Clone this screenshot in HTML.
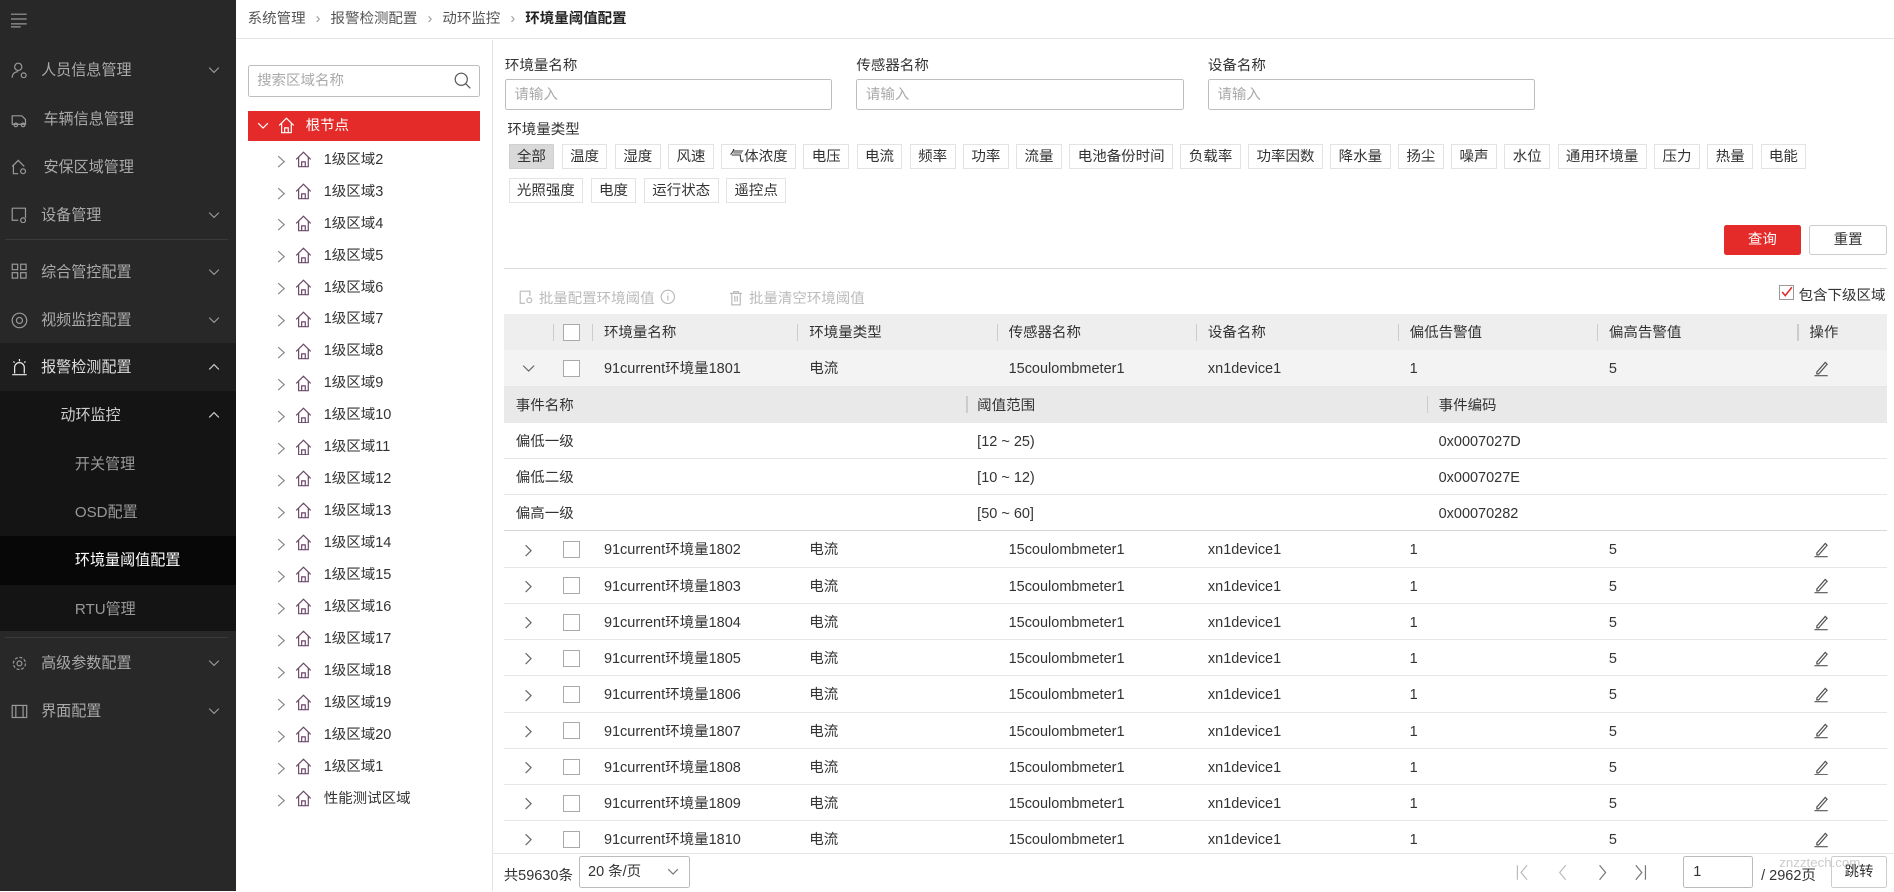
<!DOCTYPE html>
<html><head><meta charset="utf-8">
<style>
*{box-sizing:border-box;margin:0;padding:0}
html,body{width:1894px;height:892px;overflow:hidden;background:#fff}
#r{zoom:1.2079;width:1568px;height:738px;position:relative;font-family:"Liberation Sans","Noto Sans CJK SC",sans-serif;font-size:12px;color:#333;overflow:hidden}
.a{position:absolute}
#sb{left:0;top:0;width:195px;height:738px;background:#282828;color:#aaa;font-size:12.5px;overflow:hidden}
.mi{position:absolute;left:0;width:195px;height:40px;line-height:42px}
.mi .t{position:absolute;left:34px}
.mi .ic{position:absolute;left:9px;top:13px;width:14px;height:14px}
.mi .ch{position:absolute;left:172px;top:15px;width:10px;height:10px}
.tree .row{position:absolute;left:0;height:26px;line-height:28px;font-size:12px;color:#333}
.tag{display:inline-block;height:21px;line-height:20px;border:1px solid #e3e3e3;padding:0 6.1px;margin-right:6.2px;font-size:12px;color:#333;vertical-align:top}
.inp{position:absolute;height:26px;border:1px solid #bdbdbd;border-radius:2px;color:#aaa;padding-left:7px;line-height:26px;font-size:12px}
.tr{position:absolute;left:417px;width:1145px;height:30px;line-height:32px;border-bottom:1px solid #e6e6e6}
.tr span{position:absolute}
.cb{position:absolute;left:49px;top:8px;width:14px;height:14px;border:1px solid #aaa;background:#fff}
</style></head><body><div id="r">
<div id="sb" class="a">
 <svg class="a" style="left:9px;top:11px" width="14" height="12"><path d="M0 1h13M0 5h13M0 9h13M0 11.5h8" stroke="#999" stroke-width="1"/></svg>
 <div class="mi" style="top:38px"><svg class="ic" viewBox="0 0 14 14"><circle cx="6" cy="4" r="3" fill="none" stroke="#999"/><path d="M1 13c0-4 3-5 5-5" fill="none" stroke="#999"/><circle cx="10.5" cy="11" r="2" fill="none" stroke="#999"/></svg><span class="t">人员信息管理</span><svg class="ch"><path d="M1 3l4 4 4-4" fill="none" stroke="#999"/></svg></div>
 <div class="mi" style="top:79px"><svg class="ic" viewBox="0 0 14 14"><path d="M1 4h8l3 3v4H1z" fill="none" stroke="#999"/><circle cx="4" cy="11.5" r="1.5" fill="none" stroke="#999"/><circle cx="10" cy="11.5" r="1.5" fill="none" stroke="#999"/></svg><span class="t" style="left:36px">车辆信息管理</span></div>
 <div class="mi" style="top:118px"><svg class="ic" viewBox="0 0 14 14"><path d="M1 7l5-5 5 5M2 6v7h4" fill="none" stroke="#999"/><circle cx="10" cy="11" r="2" fill="none" stroke="#999"/></svg><span class="t" style="left:36px">安保区域管理</span></div>
 <div class="mi" style="top:158px"><svg class="ic" viewBox="0 0 14 14"><path d="M1 1h11v8M1 1v10h5" fill="none" stroke="#999"/><circle cx="10" cy="11" r="2" fill="none" stroke="#999"/></svg><span class="t">设备管理</span><svg class="ch"><path d="M1 3l4 4 4-4" fill="none" stroke="#999"/></svg></div>
 <div class="a" style="left:4px;top:198px;width:185px;height:1px;background:#3a3a3a"></div>
 <div class="mi" style="top:205px"><svg class="ic" viewBox="0 0 14 14"><rect x="1" y="1" width="4.5" height="4.5" fill="none" stroke="#999"/><rect x="8" y="1" width="4.5" height="4.5" fill="none" stroke="#999"/><rect x="1" y="8" width="4.5" height="4.5" fill="none" stroke="#999"/><rect x="8" y="8" width="4.5" height="4.5" fill="none" stroke="#999"/></svg><span class="t">综合管控配置</span><svg class="ch"><path d="M1 3l4 4 4-4" fill="none" stroke="#999"/></svg></div>
 <div class="mi" style="top:245px"><svg class="ic" viewBox="0 0 14 14"><circle cx="7" cy="7" r="6" fill="none" stroke="#999"/><circle cx="7" cy="7" r="2.5" fill="none" stroke="#999"/></svg><span class="t">视频监控配置</span><svg class="ch"><path d="M1 3l4 4 4-4" fill="none" stroke="#999"/></svg></div>
 <div class="mi" style="top:284px;background:#1e1e1e;color:#ddd"><svg class="ic" viewBox="0 0 14 14"><path d="M3 12V7a4 4 0 0 1 8 0v5M1 13h12M7 0v2M2 2l1 1M12 2l-1 1" fill="none" stroke="#eee"/></svg><span class="t">报警检测配置</span><svg class="ch"><path d="M1 7l4-4 4 4" fill="none" stroke="#ccc"/></svg></div>
 <div class="a" style="left:0;top:324px;width:195px;height:198px;background:#141414"></div>
 <div class="mi" style="top:324px;color:#ccc"><span class="t" style="left:50px">动环监控</span><svg class="ch"><path d="M1 7l4-4 4 4" fill="none" stroke="#ccc"/></svg></div>
 <div class="mi" style="top:364px;color:#999"><span class="t" style="left:62px">开关管理</span></div>
 <div class="mi" style="top:404px;color:#999"><span class="t" style="left:62px">OSD配置</span></div>
 <div class="mi" style="top:444px;background:#070707;color:#fff"><span class="t" style="left:62px">环境量阈值配置</span></div>
 <div class="mi" style="top:484px;color:#999"><span class="t" style="left:62px">RTU管理</span></div>
 <div class="a" style="left:4px;top:527px;width:185px;height:1px;background:#3a3a3a"></div>
 <div class="mi" style="top:529px"><svg class="ic" viewBox="0 0 14 14"><circle cx="7" cy="7" r="5" fill="none" stroke="#999" stroke-dasharray="2.5 1.4"/><circle cx="7" cy="7" r="2" fill="none" stroke="#999"/></svg><span class="t">高级参数配置</span><svg class="ch"><path d="M1 3l4 4 4-4" fill="none" stroke="#999"/></svg></div>
 <div class="mi" style="top:569px"><svg class="ic" viewBox="0 0 14 14"><rect x="1" y="2" width="12" height="10" fill="none" stroke="#999"/><path d="M4 2v10M10 2v10" stroke="#999"/></svg><span class="t">界面配置</span><svg class="ch"><path d="M1 3l4 4 4-4" fill="none" stroke="#999"/></svg></div>
</div>
<div class="a" style="left:195px;top:0;width:1373px;height:32px;border-bottom:1px solid #e4e4e4;line-height:33px;padding-left:10px;font-size:12px;color:#555">系统管理 <span style="color:#999;margin:0 5px">›</span> 报警检测配置 <span style="color:#999;margin:0 5px">›</span> 动环监控 <span style="color:#999;margin:0 5px">›</span> <b style="color:#222;font-weight:bold">环境量阈值配置</b></div>
<div class="a" style="left:407px;top:33px;width:1px;height:705px;background:#e4e4e4"></div>
<div class="inp" style="left:205px;top:54px;width:192px;color:#aaa">搜索区域名称<svg class="a" style="right:6px;top:5px" width="14" height="14"><circle cx="6" cy="6" r="5" fill="none" stroke="#555"/><path d="M9.5 9.5l4 4" stroke="#555"/></svg></div>
<div class="a" style="left:205px;top:92px;width:192px;height:25px;background:#e52a2a;color:#fff;line-height:26px">
 <svg class="a" style="left:8px;top:9px" width="10" height="8"><path d="M1 1l4 4 4-4" fill="none" stroke="#fff"/></svg>
 <svg class="a" style="left:25px;top:5px" width="14" height="14"><path d="M1 7l6-6 6 6M3 5v8h8V5M5.5 13V9h3v4" fill="none" stroke="#fff"/></svg>
 <span class="a" style="left:48px">根节点</span></div>
<div class="tree a" style="left:225px;top:119px;width:180px;height:560px" id="tree"></div>
<div class="a" style="left:418px;top:45px;font-size:12px">环境量名称</div>
<div class="a" style="left:709px;top:45px">传感器名称</div>
<div class="a" style="left:1000px;top:45px">设备名称</div>
<div class="inp" style="left:418px;top:65px;width:271px">请输入</div>
<div class="inp" style="left:709px;top:65px;width:271px">请输入</div>
<div class="inp" style="left:1000px;top:65px;width:271px">请输入</div>
<div class="a" style="left:420px;top:98px">环境量类型</div>
<div class="a" style="left:421px;top:119px;width:1140px">
<span class="tag" style="background:#d9d9d9;border-color:#d0d0d0">全部</span><span class="tag">温度</span><span class="tag">湿度</span><span class="tag">风速</span><span class="tag">气体浓度</span><span class="tag">电压</span><span class="tag">电流</span><span class="tag">频率</span><span class="tag">功率</span><span class="tag">流量</span><span class="tag">电池备份时间</span><span class="tag">负载率</span><span class="tag">功率因数</span><span class="tag">降水量</span><span class="tag">扬尘</span><span class="tag">噪声</span><span class="tag">水位</span><span class="tag">通用环境量</span><span class="tag">压力</span><span class="tag">热量</span><span class="tag">电能</span>
</div>
<div class="a" style="left:421px;top:147px;width:1120px"><span class="tag">光照强度</span><span class="tag">电度</span><span class="tag">运行状态</span><span class="tag">遥控点</span></div>
<div class="a" style="left:1427px;top:186px;width:64px;height:25px;background:#e52a2a;color:#fff;text-align:center;line-height:26px;border-radius:2px">查询</div>
<div class="a" style="left:1498px;top:186px;width:64px;height:25px;border:1px solid #ccc;text-align:center;line-height:24px;border-radius:2px">重置</div>
<div class="a" style="left:417px;top:222px;width:1145px;height:1px;background:#dcdcdc"></div>
<div class="a" style="left:430px;top:238px;color:#bbb">
 <svg class="a" style="left:0;top:2px" width="12" height="12"><path d="M1 1h8v4M1 1v10h4" fill="none" stroke="#bbb"/><circle cx="8.5" cy="8.5" r="2" fill="none" stroke="#bbb"/></svg>
 <span class="a" style="left:16px;white-space:nowrap">批量配置环境阈值</span>
 <svg class="a" style="left:116px;top:1px" width="13" height="13"><circle cx="6.5" cy="6.5" r="5.5" fill="none" stroke="#bbb"/><path d="M6.5 5.5v4M6.5 3.5v1" stroke="#bbb"/></svg>
</div>
<div class="a" style="left:604px;top:238px;color:#bbb;white-space:nowrap"><svg style="vertical-align:-2px;margin-right:6px" width="10" height="12"><path d="M0 2h10M3 2V0.5h4V2M1.5 2v9.5h7V2M4 4v5M6 4v5" fill="none" stroke="#bbb"/></svg>批量清空环境阈值</div>
<div class="a" style="left:1473px;top:236px;width:12px;height:12px;border:1px solid #999;background:#fff"><svg class="a" style="left:1px;top:0" width="10" height="10"><path d="M1 5l2.5 3L9 1" fill="none" stroke="#e52a2a" stroke-width="1.3"/></svg></div>
<div class="a" style="left:1489px;top:235px;font-size:12px">包含下级区域</div>
<div class="tr" style="top:260px;background:#eeeeee;border:none">
 <i class="a" style="left:41px;top:8px;width:1px;height:14px;background:#ccc"></i><div class="cb"></div><i class="a" style="left:73px;top:8px;width:1px;height:14px;background:#ccc"></i>
 <span style="left:83px">环境量名称</span><i class="a" style="left:243px;top:8px;width:1px;height:14px;background:#ccc"></i>
 <span style="left:253px">环境量类型</span><i class="a" style="left:408px;top:8px;width:1px;height:14px;background:#ccc"></i>
 <span style="left:418px">传感器名称</span><i class="a" style="left:573px;top:8px;width:1px;height:14px;background:#ccc"></i>
 <span style="left:583px">设备名称</span><i class="a" style="left:740px;top:8px;width:1px;height:14px;background:#ccc"></i>
 <span style="left:750px">偏低告警值</span><i class="a" style="left:905px;top:8px;width:1px;height:14px;background:#ccc"></i>
 <span style="left:915px">偏高告警值</span><i class="a" style="left:1071px;top:8px;width:1px;height:14px;background:#ccc"></i>
 <span style="left:1081px">操作</span>
</div>
<div id="rows"></div>
<div class="tr" style="top:320px;background:#e9e9e9;border:none"><span style="left:10px">事件名称</span><i class="a" style="left:383px;top:8px;width:1px;height:14px;background:#ccc"></i><span style="left:392px">阈值范围</span><i class="a" style="left:764px;top:8px;width:1px;height:14px;background:#ccc"></i><span style="left:774px">事件编码</span></div>
<div class="tr" style="top:350px"><span style="left:10px">偏低一级</span><span style="left:392px">[12 ~ 25)</span><span style="left:774px">0x0007027D</span></div>
<div class="tr" style="top:380px"><span style="left:10px">偏低二级</span><span style="left:392px">[10 ~ 12)</span><span style="left:774px">0x0007027E</span></div>
<div class="tr" style="top:410px;border-bottom:1px solid #d8d8d8"><span style="left:10px">偏高一级</span><span style="left:392px">[50 ~ 60]</span><span style="left:774px">0x00070282</span></div>
<div class="a" style="left:408px;top:706px;width:1160px;height:32px;background:#fff;border-top:1px solid #e6e6e6"></div>
<div class="a" style="left:417px;top:715px">共59630条</div>
<div class="a" style="left:479px;top:709px;width:92px;height:26px;border:1px solid #bbb;border-radius:2px;line-height:25px;padding-left:7px">20 条/页<svg class="a" style="right:8px;top:9px" width="10" height="7"><path d="M1 1l4 4 4-4" fill="none" stroke="#777"/></svg></div>
<svg class="a" style="left:1254px;top:715px" width="115" height="14"><g fill="none" stroke="#bbb"><path d="M2 1v12M10 1L5 7l5 6"/><path d="M42 1l-5 6 5 6"/><path d="M70 1l5 6-5 6" stroke="#777"/><path d="M100 1l5 6-5 6M108 1v12" stroke="#777"/></g></svg>
<div class="a" style="left:1393px;top:709px;width:58px;height:26px;border:1px solid #bbb;border-radius:2px;line-height:25px;padding-left:8px">1</div>
<div class="a" style="left:1458px;top:715px">/ 2962页</div>
<div class="a" style="left:1473px;top:708px;color:#ccc;font-size:11px">znzztech.com</div>
<div class="a" style="left:1516px;top:709px;width:46px;height:26px;border:1px solid #ccc;border-radius:2px;line-height:25px;text-align:center">跳转</div>
</div>
<script>
var t=document.getElementById('tree'),h='';
var names=[];for(var i=2;i<=20;i++)names.push('1级区域'+i);names.push('1级区域1');names.push('性能测试区域');
names.forEach(function(n,i){var y=i*26.45;
h+='<div class="row" style="top:'+y+'px;width:180px"><svg class="a" style="left:4px;top:9px" width="7" height="11"><path d="M1 1l5 4.5-5 4.5" fill="none" stroke="#888"/></svg><svg class="a" style="left:19px;top:6px" width="14" height="14"><path d="M1 7l6-6 6 6M3 5v8h8V5M5.5 13V9h3v4" fill="none" stroke="#6a4a6a"/></svg><span class="a" style="left:43px">'+n+'</span></div>';});
t.innerHTML=h;
var r=document.getElementById('rows'),s='';
function row(top,n,exp,bg){return '<div class="tr" style="top:'+top+'px;'+(bg?'background:#f3f3f3;':'')+'">'+
'<svg class="a" style="left:15px;top:10px" width="11" height="11"><path d="'+(exp?'M1 3l4.5 4.5L10 3':'M3 1l4.5 4.5L3 10')+'" fill="none" stroke="#666"/></svg><div class="cb"></div>'+
'<span style="left:83px">91current环境量'+n+'</span><span style="left:253px">电流</span><span style="left:418px">15coulombmeter1</span><span style="left:583px">xn1device1</span><span style="left:750px">1</span><span style="left:915px">5</span>'+
'<svg class="a" style="left:1083px;top:8px" width="14" height="14"><path d="M4 10L11 2l1.5 1.5-7 8H4zM2 13h11" fill="none" stroke="#555"/></svg></div>';}
s+=row(290,1801,true,true);
for(var k=0;k<9;k++)s+=row(440+k*30,1802+k,false,false);
r.innerHTML=s;
</script>
</body></html>
